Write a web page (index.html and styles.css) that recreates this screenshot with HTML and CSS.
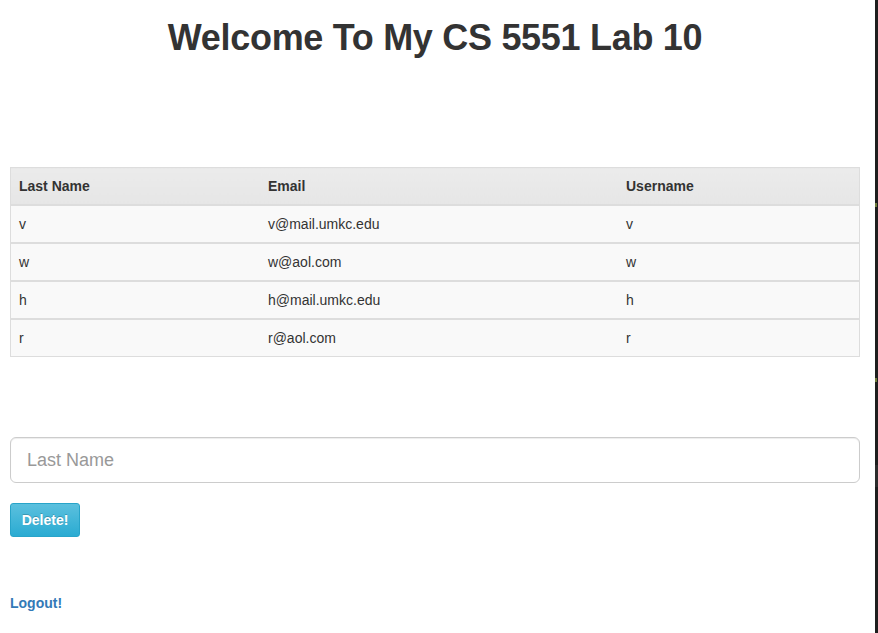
FILE: index.html
```html
<!DOCTYPE html>
<html>
<head>
<meta charset="utf-8">
<link rel="stylesheet" href="styles.css">
</head>
<body>
<div class="page">
  <main class="main">
    <h1 class="title">Welcome To My CS 5551 Lab 10</h1>
    <table class="users">
      <thead>
        <tr><th class="c1">Last Name</th><th class="c2">Email</th><th class="c3">Username</th></tr>
      </thead>
      <tbody>
        <tr><td>v</td><td>v@mail.umkc.edu</td><td>v</td></tr>
        <tr><td>w</td><td>w@aol.com</td><td>w</td></tr>
        <tr><td>h</td><td>h@mail.umkc.edu</td><td>h</td></tr>
        <tr><td>r</td><td>r@aol.com</td><td>r</td></tr>
      </tbody>
    </table>
    <input class="field" type="text" placeholder="Last Name">
    <button class="btn">Delete!</button>
    <a class="logout" href="#">Logout!</a>
  </main>
  <div class="edge"><span class="mark m1"></span><span class="mark m2"></span><span class="shade"></span></div>
</div>
</body>
</html>
```
FILE: styles.css
```css
html, body {
  margin: 0;
  padding: 0;
  height: 100%;
  background: #fff;
}
body {
  font-family: "Liberation Sans", Arial, sans-serif;
  font-size: 14px;
  color: #333;
}
.page {
  display: flex;
  height: 633px;
  overflow: hidden;
}
.main {
  flex: 1;
  padding: 0 15px 0 10px;
  display: flex;
  flex-direction: column;
  align-items: flex-start;
}
.title {
  align-self: stretch;
  text-align: center;
  font-size: 36px;
  font-weight: bold;
  line-height: 40px;
  margin: 18px 0 0;
  color: #333;
  letter-spacing: -0.3px;
}
.users {
  width: 850px;
  border-collapse: collapse;
  border: 1px solid #ddd;
  margin-top: 109px;
}
.users th, .users td {
  text-align: left;
  padding: 8px;
  line-height: 20px;
}
.users th {
  background: linear-gradient(#ebebeb, #e6e6e6);
  font-weight: bold;
}
.users td {
  background: #f9f9f9;
  border-top: 2px solid #ddd;
}
.c1 { width: 233px; }
.c2 { width: 342px; }
.field {
  box-sizing: border-box;
  width: 850px;
  height: 46px;
  margin-top: 80px;
  padding: 10px 16px;
  font-family: "Liberation Sans", Arial, sans-serif;
  font-size: 18px;
  border: 1px solid #ccc;
  border-radius: 6px;
  box-shadow: inset 0 1px 1px rgba(0,0,0,0.075);
  outline: none;
}
.field::placeholder {
  color: #999;
}
.btn {
  margin-top: 20px;
  width: 70px;
  height: 34px;
  padding: 0;
  font-family: "Liberation Sans", Arial, sans-serif;
  font-size: 14px;
  font-weight: bold;
  color: #fff;
  background: linear-gradient(#5bc0de, #2aabd2);
  border: 1px solid #28a4c9;
  border-radius: 3px;
  text-shadow: 0 -1px 0 rgba(0,0,0,0.2);
}
.logout {
  margin-top: 56px;
  font-weight: bold;
  color: #337ab7;
  text-decoration: none;
  line-height: 20px;
}
.edge {
  width: 3px;
  background: #1e1e1e;
  position: relative;
}
.mark {
  position: absolute;
  left: 0;
  width: 2px;
  height: 4px;
  background: #6d7a3a;
}
.m1 { top: 203px; }
.m2 { top: 378px; }
.shade {
  position: absolute;
  left: 0;
  top: 465px;
  width: 3px;
  height: 22px;
  background: #2c2c2c;
}
```
